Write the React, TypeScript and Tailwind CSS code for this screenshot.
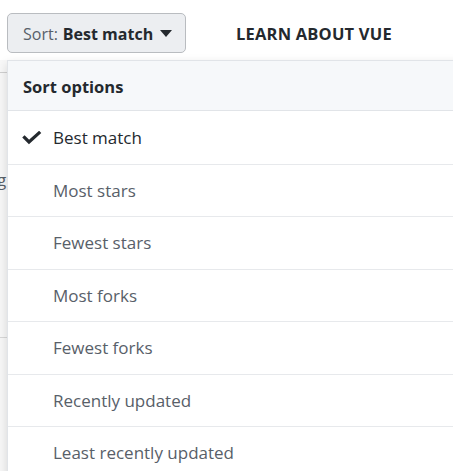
import React from "react";

const options = [
  "Best match",
  "Most stars",
  "Fewest stars",
  "Most forks",
  "Fewest forks",
  "Recently updated",
  "Least recently updated",
];

export default function App() {
  return (
    <div
      className="relative w-[453px] h-[471px] overflow-hidden bg-white text-[#24292e]"
      style={{ fontFamily: '"Open Sans", "Noto Sans", sans-serif' }}
    >
      {/* Top bar */}
      <div className="flex items-center pl-[7px] pt-[13px] h-[53px]">
        <button className="flex items-center h-[40px] w-[179px] pl-[15px] pt-[2px] rounded-[5px] border border-[#b9bcc0] bg-[#eceef1] text-[16px] leading-none">
          <span className="text-[#586069]">Sort:</span>
          <span className="ml-[5px] font-bold text-[#24292e]">Best match</span>
          <svg className="ml-[7px] mt-[-1px]" width="12" height="7" viewBox="0 0 12 7">
            <path d="M0 0h12L6 7z" fill="#24292e" />
          </svg>
        </button>
        <span className="ml-[50px] mt-[3px] text-[16.5px] font-bold tracking-[0.2px] text-[#24292e]">LEARN ABOUT VUE</span>
      </div>

      {/* Background page content behind the menu */}
      <div className="absolute left-0 top-[60px] w-[7px] h-[420px] bg-[#f8f8f8]">
        <div className="mt-[12px] h-px bg-[#d0d0d0]" />
        <div className="relative mt-[94px] h-[30px]">
          <span className="absolute left-[-3px] top-0 text-[17px] text-[#586069]">g</span>
        </div>
        <div className="mt-[140px] h-px bg-[#d8d8d8]" />
      </div>

      {/* Dropdown menu */}
      <div className="absolute left-[7px] top-[60px] w-[460px] border border-[#e1e4e8] bg-white shadow-[0_4px_10px_rgba(0,0,0,0.15)]">
        <div className="flex items-center h-[50px] pl-[15px] pt-[3px] bg-[#f6f8fa] border-b border-[#e1e4e8] text-[16.5px] font-bold text-[#24292e]">
          Sort options
        </div>
        {options.map((o, i) => (
          <div
            key={o}
            className={
              "flex items-center h-[52.5px] text-[17px] " +
              (i > 0 ? "border-t border-[#e7e9ec] " : "") +
              (i === 0 ? "text-[#24292e]" : "text-[#586069]")
            }
          >
            <div className="w-[45px] pl-[14px]">
              {i === 0 && (
                <svg width="20" height="14" viewBox="0 0 20 14" className="mt-[1px]">
                  <polyline points="2.5,6.5 7,11 17,2" fill="none" stroke="#24292e" strokeWidth="3.2" strokeLinecap="square" />
                </svg>
              )}
            </div>
            <span>{o}</span>
          </div>
        ))}
      </div>
    </div>
  );
}
